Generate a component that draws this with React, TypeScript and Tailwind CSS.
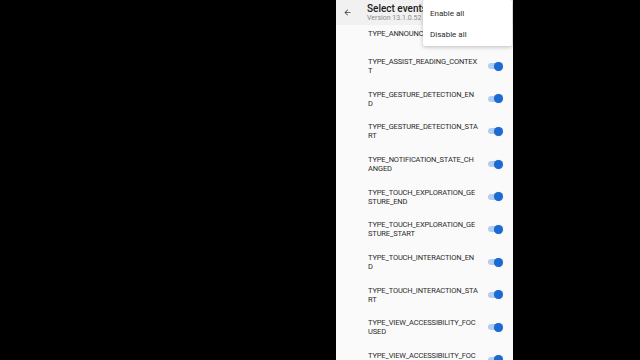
import React from "react";

const rows: string[][] = [
  ["TYPE_ANNOUNCEMENT"],
  ["TYPE_ASSIST_READING_CONTEX", "T"],
  ["TYPE_GESTURE_DETECTION_EN", "D"],
  ["TYPE_GESTURE_DETECTION_STA", "RT"],
  ["TYPE_NOTIFICATION_STATE_CH", "ANGED"],
  ["TYPE_TOUCH_EXPLORATION_GE", "STURE_END"],
  ["TYPE_TOUCH_EXPLORATION_GE", "STURE_START"],
  ["TYPE_TOUCH_INTERACTION_EN", "D"],
  ["TYPE_TOUCH_INTERACTION_STA", "RT"],
  ["TYPE_VIEW_ACCESSIBILITY_FOC", "USED"],
  ["TYPE_VIEW_ACCESSIBILITY_FOC", "USED"],
];

function Toggle() {
  return (
    <div className="relative w-[15px] h-[9px] flex items-center">
      <div className="w-[12px] h-[6px] rounded-full bg-[#b3cdf2]" />
      <div className="absolute right-0 top-0 w-[9px] h-[9px] rounded-full bg-[#1a6ad6] shadow-[0_0_1px_rgba(0,0,0,0.3)]" />
    </div>
  );
}

export default function App() {
  return (
    <div
      className="w-[640px] h-[360px] bg-black flex pl-[336px] overflow-hidden"
      style={{ fontFamily: "Roboto, 'Liberation Sans', sans-serif" }}
    >
      <div className="relative w-[177px] h-[360px] bg-[#fafafa] flex flex-col overflow-hidden">
        <div className="relative z-10 h-[25px] shrink-0 bg-[#f1f1f1] flex items-center">
          <div className="w-[31px] flex pl-[7px]">
            <svg width="9" height="9" viewBox="0 0 24 24">
              <path
                d="M20 11H7.83l5.59-5.59L12 4l-8 8 8 8 1.41-1.41L7.83 13H20v-2z"
                fill="#3c3c3c"
              />
            </svg>
          </div>
          <div className="flex flex-col leading-none">
            <div className="text-[10px] font-medium text-[#202020] leading-[11px]">Select events</div>
            <div className="text-[7px] text-[#8a8a8a] leading-[9px]">Version 13.1.0.52</div>
          </div>
        </div>
        <div className="flex-1 overflow-hidden">
          <div className="-mt-[7.8px] flex flex-col">
            {rows.map((r, i) => (
              <div key={i} className="h-[32.65px] shrink-0 flex items-center pl-[32px] pr-[10px]">
                <div className="flex-1 text-[7.5px] leading-[9px] text-[#2a2a2a] tracking-[-0.15px]">
                  {r.map((l, j) => (
                    <div key={j} className="whitespace-pre">{l}</div>
                  ))}
                </div>
                <Toggle />
              </div>
            ))}
          </div>
        </div>
        <div className="absolute z-20 top-0 left-[87px] w-[89px] h-[46px] bg-white rounded-[2px] shadow-[0_1px_4px_rgba(0,0,0,0.25)] flex flex-col pt-[3px]">
          <div className="h-[21px] flex items-center pl-[7px] text-[8px] text-[#2a2a2a]">Enable all</div>
          <div className="h-[21px] flex items-center pl-[7px] text-[8px] text-[#2a2a2a]">Disable all</div>
        </div>
      </div>
    </div>
  );
}
